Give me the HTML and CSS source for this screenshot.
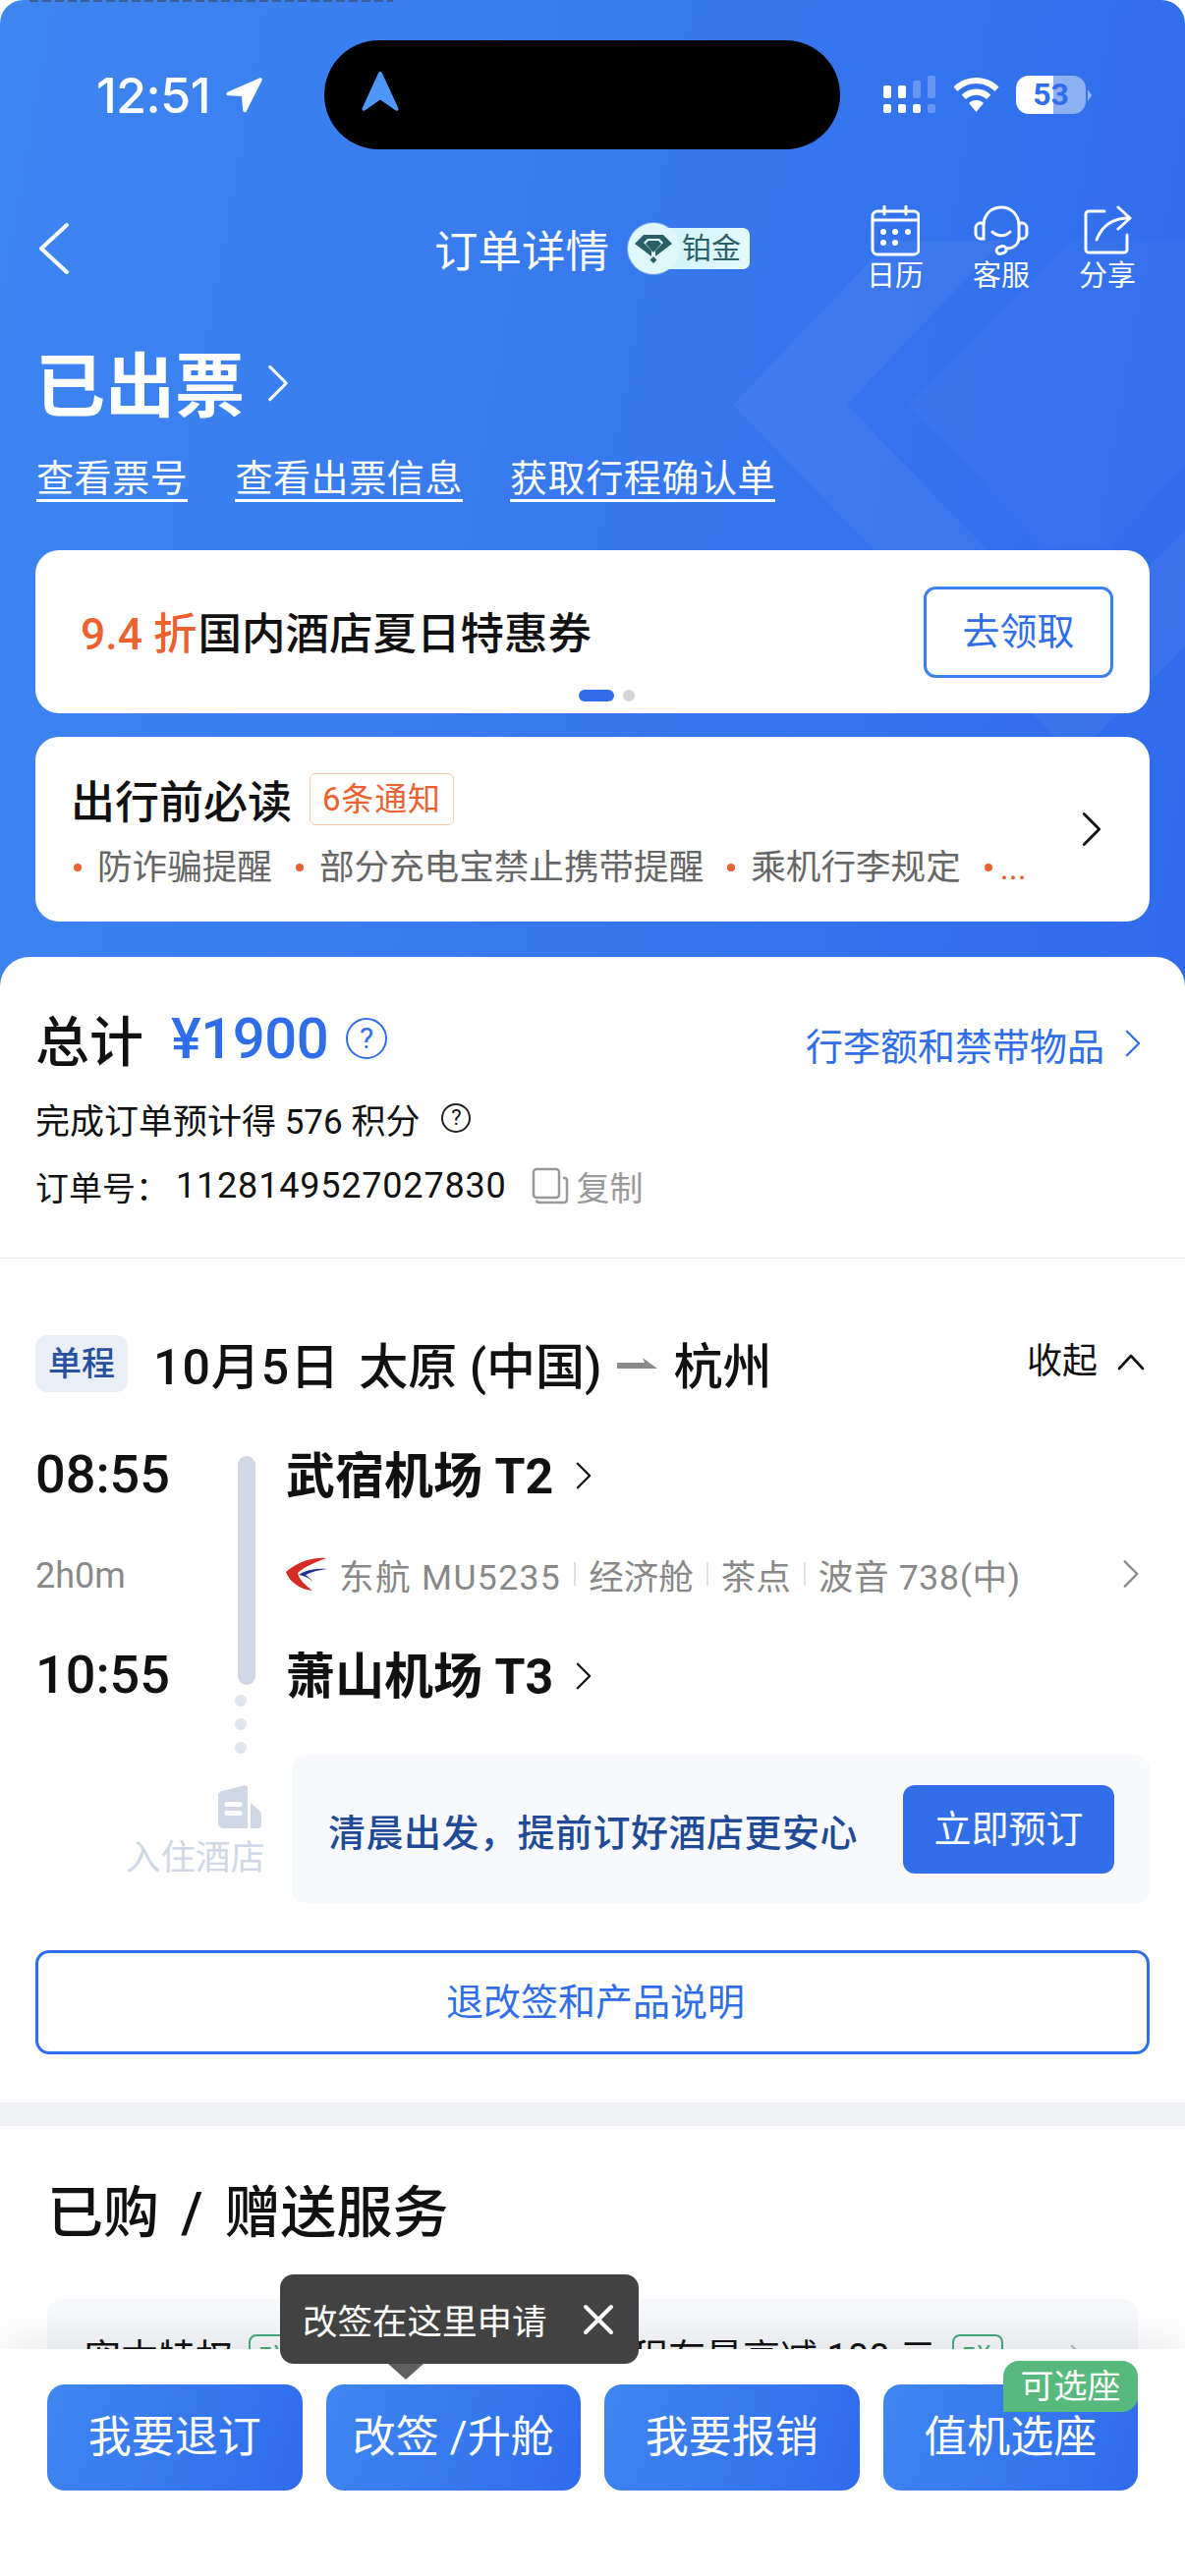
FILE: index.html
```html
<!DOCTYPE html>
<html lang="zh-CN">
<head>
    <meta charset="UTF-8">
    <meta name="viewport" content="width=device-width, initial-scale=1.0">
    <title>订单详情</title>
    <link rel="stylesheet" href="styles.css">
</head>
<body>
    <svg class="defs" width="0" height="0">
        <symbol id="chev" viewBox="0 0 20 32"><polyline points="3,2 17,16 3,30" fill="none" stroke="currentColor" stroke-width="2.6" stroke-linecap="round" stroke-linejoin="round"/></symbol>
    </svg>

    <div class="page">
        <header class="hero">
            <svg class="hero-bg" width="1206" height="1004" viewBox="0 0 1206 1004">
                <polygon points="746,412 905,245 1020,245 862,412 1094,652 1206,540 1206,658 1094,771" fill="#fff" fill-opacity="0.045"/>
                <polygon points="923,412 1090,245 1206,245 1206,475 1127,558 1065,558" fill="#fff" fill-opacity="0.025"/>
            </svg>
            <div class="peek"></div>

            <div class="status">
                <div class="time">12:51
                    <svg width="38" height="38" viewBox="0 0 38 38"><path d="M35 1.5 3 15.5c-2.5 1.2-2 3.600.8 3.800l13.200.8 1.200 13.900c.3 2.700 2.800 3 3.800.7L37.500 4c.7-2-.7-3.200-2.500-2.500Z" fill="#fff"/></svg>
                </div>
                <div class="island">
                    <svg width="38" height="42" viewBox="0 0 38 42"><path d="M19 1c1 0 1.600.6 2 1.500L37.300 38c.9 2-.8 3.400-2.500 2.400L19 29.500 3.200 40.400c-1.700 1-3.400-.4-2.500-2.400L17 2.500c.4-.9 1-1.500 2-1.500Z" fill="#4f97fb"/></svg>
                </div>
                <div class="status-right">
                    <svg width="54" height="40" viewBox="0 0 54 40">
                        <g fill="#fff">
                            <rect x="1" y="10" width="8" height="13" rx="2"/><rect x="16" y="10" width="8" height="13" rx="2"/>
                            <rect x="1" y="29" width="8" height="9" rx="2"/><rect x="16" y="29" width="8" height="9" rx="2"/><rect x="31" y="29" width="8" height="9" rx="2"/>
                        </g>
                        <g fill="#fff" fill-opacity="0.25">
                            <rect x="31" y="5" width="8" height="18" rx="2"/><rect x="46" y="0" width="8" height="23" rx="2"/><rect x="46" y="29" width="8" height="9" rx="2"/>
                        </g>
                    </svg>
                    <svg width="47" height="36" viewBox="0 0 47 36"><path d="M23.500 0C14.500 0 6.500 3.500.5 9.500l4 4.500C9.500 9 16 6 23.500 6s14 3 19 8l4-4.500C40.500 3.500 32.500 0 23.500 0Z" fill="#fff"/><path d="M23.500 11.500c-5.800 0-10.800 2.200-14.800 6l4.200 4.500c2.800-2.700 6.500-4.300 10.600-4.300s7.800 1.600 10.600 4.300l4.200-4.500c-4-3.800-9-6-14.800-6Z" fill="#fff"/><path d="M23.500 23c-3 0-5.500 1-7.500 3l7.500 9 7.500-9c-2-2-4.500-3-7.500-3Z" fill="#fff"/></svg>
                    <div class="battery">53</div>
                    <div class="battery-tip"></div>
                </div>
            </div>

            <nav class="nav">
                <svg class="back" width="34" height="54" viewBox="0 0 34 54"><polyline points="30,3 4,27 30,51" fill="none" stroke="#fff" stroke-width="4" stroke-linecap="round" stroke-linejoin="round"/></svg>
                <h1 class="nav-title">订单详情</h1>
                <div class="level">
                    <div class="level-gem">
                        <svg width="38" height="30" viewBox="0 0 38 30">
                            <path d="M9 1H29L38 10 21 23V17L29 9 25 5H13L9 9 17 17V23L0 10Z" fill="#2b5f68"/>
                            <path d="M14 7H24L27 10 19 19 11 10Z" fill="#2b5f68"/>
                            <path d="M19 23 22.500 26.500 19 30 15.500 26.500Z" fill="#2b5f68"/>
                        </svg>
                    </div>
                    <div class="level-text">铂金</div>
                </div>
                <div class="nav-actions">
                    <div class="nav-action">
                        <svg width="50" height="52" viewBox="0 0 50 52" fill="none" stroke="#fff" stroke-width="3" stroke-linecap="round">
                            <rect x="2" y="6" width="47" height="44" rx="5"/>
                            <path d="M2 15H49M14 1V9M36 1V9"/>
                            <g fill="#fff" stroke="none"><circle cx="13" cy="27" r="3"/><circle cx="25" cy="27" r="3"/><circle cx="38" cy="27" r="3"/><circle cx="13" cy="38" r="3"/><circle cx="25" cy="38" r="3"/></g>
                        </svg>
                        <span>日历</span>
                    </div>
                    <div class="nav-action">
                        <svg width="56" height="52" viewBox="0 0 56 52" fill="none" stroke="#fff" stroke-width="3" stroke-linecap="round">
                            <path d="M10 19C11 9 18 2 28 2s17 7 18 17"/>
                            <path d="M10 18H7a5 5 0 0 0-5 5v6a5 5 0 0 0 5 5h3ZM46 18h3a5 5 0 0 1 5 5v6a5 5 0 0 1-5 5h-3Z"/>
                            <path d="M19 27c5 5 13 5 18 0"/>
                            <path d="M46 34c-1 6-6 10-13 10"/>
                            <rect x="23" y="42" width="10" height="7" rx="3.500" transform="rotate(-18 28 45)"/>
                        </svg>
                        <span>客服</span>
                    </div>
                    <div class="nav-action">
                        <svg width="56" height="52" viewBox="0 0 56 52" fill="none" stroke="#fff" stroke-width="3" stroke-linecap="round" stroke-linejoin="round">
                            <path d="M25 6H9a3 3 0 0 0-3 3V45a3 3 0 0 0 3 3H45a3 3 0 0 0 3-3V30"/>
                            <path d="M17 35C22 22 32 13 50 13"/>
                            <path d="M39 2 51 13 39 24"/>
                        </svg>
                        <span>分享</span>
                    </div>
                </div>
            </nav>

            <div class="ticket-state">已出票
                <svg class="state-arrow" width="24" height="38" viewBox="0 0 20 32" color="#fff"><use href="#chev"/></svg>
            </div>
            <div class="ticket-links">
                <a class="ticket-link">查看票号</a>
                <a class="ticket-link">查看出票信息</a>
                <a class="ticket-link">获取行程确认单</a>
            </div>

            <div class="promo card">
                <div class="promo-text"><span class="promo-off">9.4 折</span>国内酒店夏日特惠券</div>
                <div class="promo-btn">去领取</div>
                <div class="promo-dots"><i class="on"></i><i></i></div>
            </div>

            <div class="notice card">
                <div class="notice-main">
                    <div class="notice-head">
                        <span class="notice-title">出行前必读</span>
                        <span class="notice-count">6条通知</span>
                    </div>
                    <div class="notice-list">
                        <span class="notice-item">防诈骗提醒</span>
                        <span class="notice-item">部分充电宝禁止携带提醒</span>
                        <span class="notice-item">乘机行李规定</span>
                        <span class="notice-item more">...</span>
                    </div>
                </div>
                <svg class="notice-arrow" width="22" height="36" viewBox="0 0 20 32" color="#111"><use href="#chev"/></svg>
            </div>
        </header>

        <main class="sheet">
            <section class="summary">
                <div class="total-row">
                    <span class="total-label">总计</span>
                    <span class="total-price">¥1900</span>
                    <span class="help help-blue">?</span>
                    <span class="baggage">行李额和禁带物品
                        <svg width="18" height="28" viewBox="0 0 20 32" color="#2f6ee8"><use href="#chev"/></svg>
                    </span>
                </div>
                <div class="points-row">完成订单预计得 576 积分 <span class="help">?</span></div>
                <div class="order-row">
                    <span>订单号：</span><span class="order-no">1128149527027830</span>
                    <svg width="38" height="38" viewBox="0 0 38 38" fill="none" stroke="#999" stroke-width="2.500" stroke-linejoin="round"><rect x="2" y="2" width="26" height="29" rx="3"/><path d="M32 11h2a2.500 2.500 0 0 1 2 2.500V33a3 3 0 0 1-3 3H8a3 3 0 0 1-3-2.500"/></svg>
                    <span class="copy">复制</span>
                </div>
            </section>

            <section class="trip">
                <div class="trip-head">
                    <span class="trip-tag">单程</span>
                    <div class="trip-title">
                        <span class="trip-date">10月5日</span><span>太原 (中国)</span>
                        <svg class="trip-arrow" width="41" height="11" viewBox="0 0 41 11"><path d="M0 5H28L26 0 41 11H0Z" fill="#8a8a8a"/></svg>
                        <span class="trip-to">杭州</span>
                    </div>
                    <div class="trip-toggle">收起
                        <svg width="28" height="17" viewBox="0 0 28 17"><polyline points="2,15 14,2 26,15" fill="none" stroke="#111" stroke-width="2.600" stroke-linecap="round" stroke-linejoin="round"/></svg>
                    </div>
                </div>

                <div class="route">
                    <div class="track">
                        <div class="track-bar"></div>
                        <i></i><i></i><i></i>
                    </div>
                    <div class="route-time">08:55</div>
                    <div class="route-place">武宿机场 T2
                        <svg width="18" height="28" viewBox="0 0 20 32" color="#111"><use href="#chev"/></svg>
                    </div>
                    <div class="route-dur">2h0m</div>
                    <div class="route-flight">
                        <svg class="airline" width="42" height="34" viewBox="0 0 42 34">
                            <path d="M41 1C30 0 14 3 0 15c3 9 14 18 27 19-8-6-14-12-15-18C20 9 30 5 41 1Z" fill="#d62a25"/>
                            <path d="M42 12C30 11 20 13 13 18c7 1 12 4 16 9-3-4-6-7-9-9 6-3 13-5 22-6Z" fill="#252f8f"/>
                        </svg>
                        <span class="flight-no">东航 MU5235</span><b></b><span>经济舱</span><b></b><span>茶点</span><b></b><span class="flight-plane">波音 738(中)</span>
                        <svg class="flight-arrow" width="18" height="30" viewBox="0 0 20 32" color="#888"><use href="#chev"/></svg>
                    </div>
                    <div class="route-time">10:55</div>
                    <div class="route-place">萧山机场 T3
                        <svg width="18" height="28" viewBox="0 0 20 32" color="#111"><use href="#chev"/></svg>
                    </div>
                </div>

                <div class="hotel">
                    <div class="hotel-side">
                        <svg width="44" height="44" viewBox="0 0 44 44">
                            <path d="M4 6 26 .5C28 0 30 1 30 3V44H5a5 5 0 0 1-5-5V10c0-2 2-3.500 4-4ZM9 17a2 2 0 0 0 0 5H22a2 2 0 0 0 0-5ZM9 26a2 2 0 0 0 0 5H22a2 2 0 0 0 0-5Z" fill="#d0d8e6" fill-rule="evenodd"/>
                            <path d="M33 18 42 26c1.300 1.200 2 2.500 2 4V40a4 4 0 0 1-4 4H33Z" fill="#d0d8e6"/>
                        </svg>
                        <span>入住酒店</span>
                    </div>
                    <div class="hotel-box">
                        <span class="hotel-text">清晨出发，提前订好酒店更安心</span>
                        <span class="hotel-btn">立即预订</span>
                    </div>
                </div>

                <div class="rules-btn">退改签和产品说明</div>
            </section>

            <div class="band"></div>

            <section class="services">
                <h2 class="services-title">已购 / 赠送服务</h2>
                <div class="service-card">
                    <div class="service-item">
                        <span>宠本特权</span><span class="gift">赠</span>
                        <svg class="service-arrow" width="20" height="32" viewBox="0 0 20 32" color="#666"><use href="#chev"/></svg>
                    </div>
                    <div class="service-item">
                        <span>行程有最高减 100 元</span><span class="gift">赠</span>
                        <svg class="service-arrow light" width="20" height="32" viewBox="0 0 20 32" color="#bbb"><use href="#chev"/></svg>
                    </div>
                </div>
            </section>
        </main>

        <footer class="bar">
            <div class="bar-btn">我要退订</div>
            <div class="bar-btn">改签 /升舱</div>
            <div class="bar-btn">我要报销</div>
            <div class="bar-btn">值机选座<span class="seat-tag">可选座</span></div>

            <div class="tip">
                <span>改签在这里申请</span>
                <svg width="32" height="32" viewBox="0 0 32 32"><path d="M3 3 29 29M29 3 3 29" stroke="#fff" stroke-width="4" stroke-linecap="round"/></svg>
            </div>
        </footer>
    </div>
</body>
</html>
```

FILE: styles.css
```css
* {
    margin: 0;
    padding: 0;
    box-sizing: border-box;
}

body {
    width: 1206px;
    height: 2622px;
    overflow: hidden;
    background: #fff;
    color: #111;
    font-family: Roboto, "Noto Sans CJK SC", sans-serif;
}

.defs {
    position: absolute;
}

.page {
    position: relative;
    width: 1206px;
    height: 2622px;
    overflow: hidden;
}

/* top blue area */
.hero {
    position: relative;
    height: 1004px;
    padding-top: 41px;
    overflow: hidden;
    border-radius: 24px 24px 0 0;
    background: linear-gradient(100deg, #3e86f0 0%, #2f6bec 100%);
}

.hero-bg {
    position: absolute;
    top: 0;
    left: 0;
}

.peek {
    position: absolute;
    top: 0;
    left: 30px;
    width: 370px;
    height: 2px;
    background: repeating-linear-gradient(90deg, #3d4f70 0 9px, transparent 9px 13px);
    opacity: 0.7;
}

.status,
.nav,
.ticket-state,
.ticket-links,
.card {
    position: relative;
}

.status {
    display: flex;
    align-items: center;
    height: 111px;
    padding-left: 98px;
}

.time {
    display: flex;
    align-items: center;
    gap: 15px;
    width: 232px;
    color: #fff;
    font-family: Inter, sans-serif;
    font-size: 50px;
    font-weight: 500;
    letter-spacing: -0.5px;
}

.island {
    display: flex;
    align-items: center;
    width: 525px;
    height: 111px;
    padding: 0 0 8px 38px;
    border-radius: 56px;
    background: #000;
}

.status-right {
    display: flex;
    align-items: center;
    margin-left: 43px;
}

.status-right svg:nth-child(2) {
    margin-left: 18px;
}

.battery {
    width: 71px;
    height: 39px;
    margin-left: 17px;
    border-radius: 13px;
    background: linear-gradient(90deg, #fff 54%, rgba(255, 255, 255, 0.45) 54%);
    color: #2f6eec;
    font-size: 32px;
    font-weight: 700;
    line-height: 39px;
    text-align: center;
}

.battery-tip {
    width: 0;
    height: 0;
    margin-left: 2px;
    border-top: 6px solid transparent;
    border-bottom: 6px solid transparent;
    border-left: 4px solid rgba(255, 255, 255, 0.5);
}

.nav {
    display: flex;
    align-items: center;
    height: 90px;
    margin-top: 56px;
    padding: 0 24px 0 38px;
}

.back {
    flex: none;
}

.nav-title {
    margin: -2px 0 0 370px;
    color: #fff;
    font-size: 44.500px;
    font-weight: 400;
}

.level {
    display: flex;
    align-items: center;
    margin-left: 19px;
}

.level-gem {
    z-index: 1;
    display: flex;
    align-items: center;
    justify-content: center;
    width: 52px;
    height: 52px;
    margin-right: -20px;
    border-radius: 50%;
    background: #dff8fb;
    box-shadow: 0 0 0 1px rgba(255, 255, 255, 0.3);
}

.level-text {
    width: 92px;
    height: 42px;
    padding-left: 23px;
    border-radius: 0 7px 7px 0;
    background: linear-gradient(90deg, #cdf4f8, #e4fafd);
    color: #2b6068;
    font-size: 30px;
    line-height: 42px;
    white-space: nowrap;
}

.nav-actions {
    display: flex;
    margin: 0 1px 0 auto;
}

.nav-action {
    display: flex;
    flex-direction: column;
    align-items: center;
    width: 108px;
    color: #fff;
    font-size: 29px;
    line-height: 32px;
}

.nav-action span {
    margin-top: 4px;
}

.ticket-state {
    display: flex;
    align-items: center;
    gap: 22px;
    height: 80px;
    margin-top: 49px;
    padding-left: 36px;
    color: #fff;
    font-size: 71px;
    font-weight: 700;
}

.state-arrow {
    margin-top: 6px;
}

.ticket-links {
    display: flex;
    gap: 48px;
    margin-top: 39px;
    padding-left: 37px;
}

.ticket-link {
    border-bottom: 3px solid #fff;
    color: #fff;
    font-size: 38px;
    letter-spacing: 0.600px;
    line-height: 42px;
}

.card {
    margin: 0 36px;
    border-radius: 24px;
    background: #fff;
}

.promo {
    display: flex;
    align-items: center;
    justify-content: space-between;
    height: 166px;
    margin-top: 49px;
    padding: 0 37px 0 46px;
}

.promo-text {
    margin-top: -4px;
    font-size: 44.500px;
    font-weight: 500;
}

.promo-off {
    margin-right: 1px;
    color: #ec6130;
}

.promo-btn {
    width: 193px;
    height: 93px;
    margin-top: 0;
    border: 3px solid #3b80ee;
    border-radius: 12px;
    color: #2f6ee8;
    font-size: 38px;
    line-height: 87px;
    text-align: center;
}

.promo-dots {
    position: absolute;
    bottom: 12px;
    left: 553px;
    display: flex;
    gap: 9px;
}

.promo-dots i {
    width: 12px;
    height: 12px;
    border-radius: 6px;
    background: #d6d6d6;
}

.promo-dots .on {
    width: 36px;
    background: #2f6ee8;
}

.notice {
    display: flex;
    align-items: center;
    justify-content: space-between;
    height: 188px;
    margin-top: 24px;
    padding: 0 48px 0 36px;
}

.notice-head {
    display: flex;
    align-items: center;
    gap: 18px;
}

.notice-title {
    font-size: 45px;
    font-weight: 500;
}

.notice-count {
    height: 53px;
    padding: 0 12px;
    border: 1px solid #f8c9a8;
    border-radius: 6px;
    color: #ec6130;
    font-size: 33px;
    letter-spacing: 0.800px;
    line-height: 51px;
}

.notice-list {
    display: flex;
    gap: 24px;
    margin-top: 13px;
    margin-left: 3px;
    color: #666;
    font-size: 35.600px;
    line-height: 48px;
    white-space: nowrap;
}

.notice-item {
    display: flex;
    align-items: center;
    gap: 16px;
}

.notice-item::before {
    content: "";
    width: 8px;
    height: 8px;
    border-radius: 50%;
    background: #ec6130;
}

.notice-item.more {
    gap: 8px;
    color: #ec6130;
    font-size: 34px;
}

/* white sheet */
.sheet {
    position: relative;
    margin-top: -30px;
    border-radius: 30px 30px 0 0;
    background: #fff;
}

.summary {
    padding: 48px 36px 51px;
    border-bottom: 1px solid #e6e6e6;
}

.total-row {
    display: flex;
    align-items: center;
    height: 70px;
}

.total-label {
    margin-top: -3px;
    font-size: 55px;
    font-weight: 500;
}

.total-price {
    margin-left: 28px;
    color: #2f6ee8;
    font-size: 58px;
    font-weight: 500;
    letter-spacing: -0.500px;
}

.help {
    display: inline-block;
    width: 30px;
    height: 30px;
    border: 2px solid #222;
    border-radius: 50%;
    font-size: 22px;
    line-height: 26px;
    text-align: center;
}

.help-blue {
    width: 42px;
    height: 42px;
    margin-left: 18px;
    border-color: #2f6ee8;
    color: #2f6ee8;
    font-size: 30px;
    line-height: 38px;
}

.baggage {
    display: flex;
    align-items: center;
    gap: 20px;
    margin: 10px 8px 0 auto;
    color: #2f6ee8;
    font-size: 38px;
}

.points-row {
    display: flex;
    align-items: center;
    gap: 22px;
    height: 44px;
    margin-top: 24px;
    font-size: 35px;
}

.order-row {
    display: flex;
    align-items: center;
    height: 44px;
    margin-top: 25px;
    font-size: 34px;
}

.order-no {
    margin-left: 7px;
    margin-right: 25px;
    font-size: 36px;
    letter-spacing: 0.800px;
}

.copy {
    margin-left: 8px;
    color: #999;
}

.trip {
    padding: 78px 36px 49px;
}

.trip-head {
    display: flex;
    align-items: flex-start;
}

.trip-tag {
    flex: none;
    width: 94px;
    height: 58px;
    border-radius: 12px;
    background: #e9eef7;
    color: #27509f;
    font-size: 34px;
    font-weight: 500;
    line-height: 58px;
    text-align: center;
}

.trip-title {
    display: flex;
    align-items: center;
    gap: 19px;
    height: 56px;
    margin-left: 26px;
    font-size: 50px;
    font-weight: 500;
    white-space: nowrap;
}

.trip-date {
    letter-spacing: 1px;
}

.trip-arrow {
    margin-left: -3px;
}

.trip-to {
    margin-left: -3px;
}

.trip-toggle {
    display: flex;
    align-items: center;
    gap: 20px;
    margin: 1px 5px 0 auto;
    font-size: 36px;
    line-height: 52px;
}

.route {
    position: relative;
    display: grid;
    grid-template-columns: 206px 18px 1fr;
    grid-template-rows: 60px 60px 60px;
    row-gap: 42px;
    margin-top: 53px;
    align-items: center;
}

.track {
    grid-column: 2;
    grid-row: 1 / 4;
    align-self: start;
    height: 303px;
    margin-top: 12px;
}

.track-bar {
    width: 18px;
    height: 233px;
    margin-bottom: 10px;
    border-radius: 9px;
    background: #d0d8e6;
}

.track i {
    display: block;
    width: 12px;
    height: 12px;
    margin: 0 0 12px -3px;
    border-radius: 50%;
    background: #e0e5ef;
}

.route-time {
    grid-column: 1;
    font-size: 54px;
    font-weight: 500;
}

.route-dur {
    grid-column: 1;
    margin-top: 3px;
    color: #888;
    font-size: 36px;
}

.route-place,
.route-flight {
    grid-column: 3;
    display: flex;
    align-items: center;
    margin-left: 31px;
}

.route-place {
    gap: 22px;
    margin-top: -5px;
    font-size: 50px;
    font-weight: 700;
}

.route-place svg {
    margin-top: 8px;
}

.route-flight {
    color: #888;
    font-size: 35.500px;
}

.flight-no {
    letter-spacing: 1.400px;
}

.flight-plane {
    letter-spacing: 0.700px;
}

.route-flight b {
    width: 2px;
    height: 24px;
    margin: 0 13px;
    background: #e0e0e0;
}

.airline {
    margin-right: 12px;
}

.flight-arrow {
    margin-left: auto;
    margin-right: 10px;
}

.hotel {
    display: flex;
    margin-top: 53px;
}

.hotel-side {
    display: flex;
    flex: none;
    flex-direction: column;
    align-items: flex-end;
    width: 261px;
    padding: 30px 27px 0 0;
    color: #d0d8e6;
    font-size: 35.500px;
    line-height: 40px;
}

.hotel-side svg {
    margin: 0 4px 10px 0;
}

.hotel-box {
    display: flex;
    flex: 1;
    align-items: center;
    justify-content: space-between;
    height: 150px;
    padding: 0 36px 0 37px;
    border-radius: 14px;
    background: #f7f9fd;
}

.hotel-text {
    color: #1f4a96;
    font-size: 38px;
    font-weight: 500;
    letter-spacing: 0.500px;
}

.hotel-btn {
    width: 215px;
    height: 90px;
    border-radius: 12px;
    background: #316ee8;
    color: #fff;
    font-size: 38px;
    line-height: 90px;
    text-align: center;
}

.rules-btn {
    height: 106px;
    margin-top: 48px;
    padding-left: 6px;
    border: 3px solid #2f6ee8;
    border-radius: 14px;
    color: #2f6ee8;
    font-size: 38px;
    line-height: 100px;
    text-align: center;
}

.band {
    height: 24px;
    background: #f0f1f5;
}

.services {
    padding: 54px 48px 0;
}

.services-title {
    font-size: 57px;
    font-weight: 500;
    line-height: 70px;
    word-spacing: 8px;
}

.service-card {
    display: flex;
    justify-content: space-between;
    height: 240px;
    margin-top: 52px;
    padding: 36px 50px 0 37px;
    border-radius: 16px;
    background: linear-gradient(180deg, #f8f9fc, #eeeff4);
}

.service-item {
    display: flex;
    align-items: flex-start;
    gap: 16px;
    font-size: 38px;
    line-height: 50px;
}

.service-item > span:first-child {
    margin-top: -1px;
}

.gift {
    width: 52px;
    height: 56px;
    border: 2px solid #45ab7c;
    border-radius: 8px;
    color: #45ab7c;
    font-size: 34px;
    line-height: 52px;
    text-align: center;
}

.service-arrow {
    margin: 10px 0 0 211px;
}

.service-arrow.light {
    margin-left: 51px;
}

/* fixed bottom buttons */
.bar {
    position: absolute;
    top: 2391px;
    right: 0;
    bottom: 0;
    left: 0;
    display: flex;
    gap: 24px;
    align-items: flex-start;
    padding: 36px 48px 0;
    background: #fff;
    box-shadow: 0 -14px 40px rgba(0, 0, 0, 0.07);
}

.bar-btn {
    position: relative;
    flex: 1;
    height: 108px;
    border-radius: 18px;
    background: linear-gradient(110deg, #3f87f0, #2f6bec);
    color: #fff;
    font-size: 44px;
    line-height: 108px;
    text-align: center;
}

.seat-tag {
    position: absolute;
    top: -24px;
    right: 0;
    width: 137px;
    height: 52px;
    border-radius: 16px 16px 16px 0;
    background: #57ba7c;
    font-size: 34px;
    line-height: 52px;
}

.tip {
    position: absolute;
    top: -76px;
    left: 285px;
    display: flex;
    align-items: center;
    justify-content: space-between;
    width: 365px;
    height: 91px;
    padding: 0 25px 0 23px;
    border-radius: 14px;
    background: #424242;
    color: #fff;
    font-size: 35.500px;
}

.tip::after {
    content: "";
    position: absolute;
    top: 91px;
    left: 110px;
    border-top: 16px solid #5f5f5f;
    border-right: 18px solid transparent;
    border-left: 18px solid transparent;
}
```
